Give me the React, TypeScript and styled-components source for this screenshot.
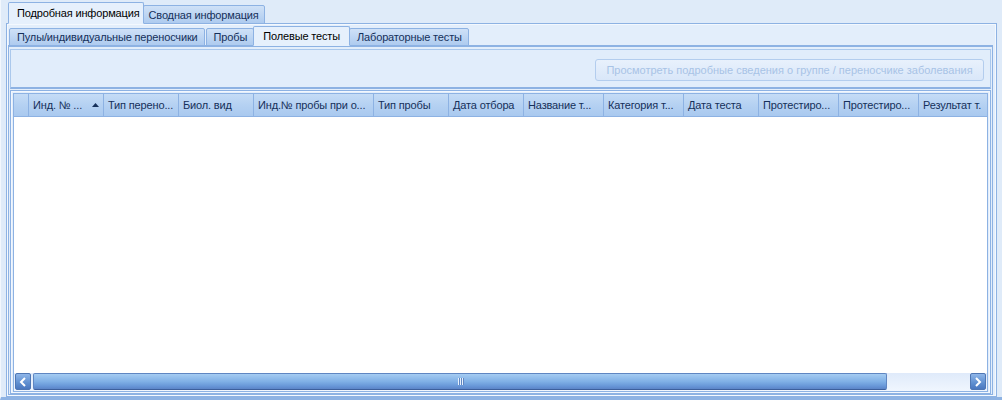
import React from 'react';
import styled, { createGlobalStyle } from 'styled-components';

const GlobalStyle = createGlobalStyle`
  html, body {
    margin: 0;
    padding: 0;
    background: #dfebf9;
  }
  body {
    font-family: "Liberation Sans", Arial, sans-serif;
    font-size: 11px;
    letter-spacing: -0.15px;
    color: #15305a;
  }
`;

const Page = styled.div`
  width: 1002px;
  height: 400px;
  box-sizing: border-box;
  padding: 3px 1px 0 1px;
  display: flex;
  flex-direction: column;
  background: #dfebf9;
  border-left: 1px solid #f2f7fd;
  border-bottom: 3px solid #8db2e3;
`;

const TabStrip = styled.div<{ $indent: number; $h: number }>`
  display: flex;
  align-items: flex-end;
  padding-left: ${({ $indent }) => $indent}px;
  height: ${({ $h }) => $h}px;
  position: relative;
  z-index: 1;
  margin-bottom: -1px;
  flex-shrink: 0;
`;

const tabPadding = (active?: boolean, small?: boolean) => {
  if (active && !small) return '0 3px 0 8px';
  if (active) return '0 9px';
  if (small) return '0 6px 0 7px';
  return '0 5px';
};

const Tab = styled.div<{ $active?: boolean; $small?: boolean }>`
  box-sizing: border-box;
  height: ${({ $active, $small }) => ($active ? ($small ? 20 : 22) : $small ? 18 : 19)}px;
  padding: ${({ $active, $small }) => tabPadding($active, $small)};
  display: flex;
  align-items: center;
  white-space: nowrap;
  border: 1px solid #8db2e3;
  border-bottom: ${({ $active }) => ($active ? '1px solid #e6f0fc' : '1px solid #8db2e3')};
  border-radius: 2px 2px 0 0;
  margin-right: 1px;
  color: ${({ $active }) => ($active ? '#000' : '#15305a')};
  background: ${({ $active }) =>
    $active ? '#e6f0fc' : 'linear-gradient(to bottom, #cfe1f7 0%, #aecbef 100%)'};
  ${({ $active }) => ($active ? 'margin-left: -2px; margin-right: -1px; position: relative;' : '')}
`;

const OuterPanel = styled.div`
  flex: 1;
  margin: 0 4px 0 4px;
  border: 1px solid #8db2e3;
  box-shadow: inset 0 0 0 1px #f3f8fe;
  background: #e3eefb;
  padding: 3px 3px 1px 1px;
  display: flex;
  flex-direction: column;
  min-height: 0;
`;

const InnerPanel = styled.div`
  flex: 1;
  border: 1px solid #8db2e3;
  border-top: 2px solid #8db2e3;
  background: #e3eefb;
  padding: 2px 1px 0 1px;
  display: flex;
  flex-direction: column;
  min-height: 0;
`;

const Toolbar = styled.div`
  height: 37px;
  flex-shrink: 0;
  border: 1px solid #aac8ec;
  border-bottom: 2px solid #8db2e3;
  background: #e1edfb;
  display: flex;
  align-items: center;
  justify-content: flex-end;
  padding-right: 6px;
  margin-bottom: 1px;
`;

const ActionButton = styled.button`
  height: 22px;
  width: 389px;
  margin-top: 2px;
  font-family: "Liberation Sans", Arial, sans-serif;
  font-size: 11px;
  letter-spacing: 0;
  white-space: nowrap;
  color: #a8c3e6;
  border: 1px solid #b3cdee;
  border-radius: 3px;
  background: linear-gradient(to bottom, #e8f1fc 0%, #d9e7f9 100%);
  padding: 0;
`;

const GridFrame = styled.div`
  flex: 1;
  border: 1px solid #8db2e3;
  box-shadow: inset 0 0 0 1px #f2f7fe;
  padding: 2px 2px 1px 2px;
  display: flex;
  flex-direction: column;
  min-height: 0;
  background: #e3eefb;
`;

const Grid = styled.div`
  flex: 1;
  border: 1px solid #8db2e3;
  background: #fff;
  display: flex;
  flex-direction: column;
  min-height: 0;
  overflow: hidden;
`;

const HeaderRow = styled.div`
  display: flex;
  height: 22px;
  background: linear-gradient(to bottom, #c5dcf6 0%, #b5d1f2 50%, #a9c9ef 100%);
  border-bottom: 1px solid #8db2e3;
  flex-shrink: 0;
`;

const HeaderCell = styled.div<{ $w: number }>`
  box-sizing: border-box;
  width: ${({ $w }) => $w}px;
  flex-shrink: 0;
  border-right: 1px solid #8db2e3;
  padding-left: 4px;
  display: flex;
  align-items: center;
  white-space: nowrap;
  overflow: hidden;
  color: #15305a;
`;

const SortArrow = styled.svg`
  margin-left: 10px;
  flex-shrink: 0;
`;

const Body = styled.div`
  flex: 1;
  background: #fff;
`;

const ScrollBar = styled.div`
  height: 17px;
  display: flex;
  align-items: stretch;
  background: linear-gradient(to bottom, #dfeafa 0%, #f0f6fe 100%);
  padding: 0 1px 1px 1px;
  flex-shrink: 0;
`;

const ArrowButton = styled.div`
  width: 16px;
  border: 1px solid #4f77b4;
  border-radius: 2px;
  background: linear-gradient(to bottom, #8fb6e9 0%, #5f8fd0 60%, #4a77bf 100%);
  display: flex;
  align-items: center;
  justify-content: center;
  box-sizing: border-box;
`;

const Thumb = styled.div`
  width: 852px;
  margin-left: 2px;
  border: 1px solid #5f86c2;
  border-bottom-color: #3d5f9c;
  border-radius: 2px;
  background: linear-gradient(to bottom, #a5ccf2 0%, #80b0e6 50%, #6897d8 80%, #5b84c8 100%);
  display: flex;
  align-items: center;
  justify-content: center;
`;

const Grip = styled.div`
  display: flex;
  gap: 1px;
  span {
    width: 1px;
    height: 7px;
    background: #e8f1fc;
    box-shadow: 1px 0 0 #5f86c2;
  }
`;

const Track = styled.div`
  flex: 1;
`;

const columns = [
  { title: 'Инд. № ...', w: 75, sorted: true },
  { title: 'Тип перено...', w: 75 },
  { title: 'Биол. вид', w: 75 },
  { title: 'Инд.№ пробы при о...', w: 120 },
  { title: 'Тип пробы', w: 75 },
  { title: 'Дата отбора', w: 75 },
  { title: 'Название т...', w: 80 },
  { title: 'Категория т...', w: 80 },
  { title: 'Дата теста', w: 75 },
  { title: 'Протестиро...', w: 80 },
  { title: 'Протестиро...', w: 80 },
  { title: 'Результат т.', w: 80 },
];

const Chevron: React.FC<{ dir: 'left' | 'right' }> = ({ dir }) => (
  <svg width="8" height="10" viewBox="0 0 8 10">
    <path
      d={dir === 'left' ? 'M6 1 L2 5 L6 9' : 'M2 1 L6 5 L2 9'}
      stroke="#fff"
      strokeWidth="2"
      fill="none"
    />
  </svg>
);

const App: React.FC = () => {
  return (
    <>
      <GlobalStyle />
      <Page>
        <TabStrip $indent={8} $h={21}>
          <Tab $active>Подробная информация</Tab>
          <Tab>Сводная информация</Tab>
        </TabStrip>
        <OuterPanel>
          <TabStrip $indent={1} $h={19}>
            <Tab $small>Пулы/индивидуальные переносчики</Tab>
            <Tab $small>Пробы</Tab>
            <Tab $small $active>Полевые тесты</Tab>
            <Tab $small>Лабораторные тесты</Tab>
          </TabStrip>
          <InnerPanel>
            <Toolbar>
              <ActionButton disabled>
                Просмотреть подробные сведения о группе / переносчике заболевания
              </ActionButton>
            </Toolbar>
            <GridFrame>
              <Grid>
                <HeaderRow>
                  <HeaderCell $w={15} />
                  {columns.map((col, i) => (
                    <HeaderCell key={i} $w={col.w}>
                      {col.title}
                      {col.sorted && (
                        <SortArrow width="7" height="4" viewBox="0 0 7 4">
                          <path d="M0 4 L3.5 0 L7 4 Z" fill="#15305a" />
                        </SortArrow>
                      )}
                    </HeaderCell>
                  ))}
                </HeaderRow>
                <Body />
                <ScrollBar>
                  <ArrowButton>
                    <Chevron dir="left" />
                  </ArrowButton>
                  <Thumb>
                    <Grip>
                      <span />
                      <span />
                      <span />
                    </Grip>
                  </Thumb>
                  <Track />
                  <ArrowButton>
                    <Chevron dir="right" />
                  </ArrowButton>
                </ScrollBar>
              </Grid>
            </GridFrame>
          </InnerPanel>
        </OuterPanel>
      </Page>
    </>
  );
};

export default App;
